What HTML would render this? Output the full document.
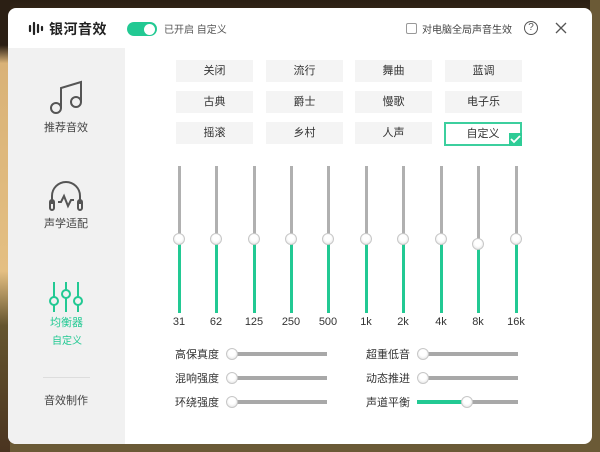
<!DOCTYPE html>
<html><head><meta charset="utf-8"><style>
*{margin:0;padding:0;box-sizing:border-box}
body{width:600px;height:452px;overflow:hidden;position:relative;font-family:"Liberation Sans","Noto Sans CJK SC",sans-serif;background:linear-gradient(180deg,#2b1f14 0,#4e3a22 10%,#6b5a36 100%)}
.leftbg{position:absolute;left:0;top:0;width:10px;height:452px;background:linear-gradient(180deg,#2b1f14 0,#2b1f14 10%,#d9b277 14%,#e4bf82 60%,#65552f 72%,#4a3420 100%)}
.rightbg{position:absolute;right:0;top:0;width:10px;height:452px;background:#6b5a36}
.win{position:absolute;left:8px;top:8px;width:584px;height:436px;background:#fff;border-radius:8px;overflow:hidden}
.side{position:absolute;left:0;top:40px;width:117px;height:396px;background:#f1f1f1}
.t{position:absolute;white-space:nowrap}
.btn{position:absolute;width:77px;height:22px;background:#f4f4f4;color:#333;font-size:11px;text-align:center;line-height:22px}
.eq{position:absolute;width:3px;top:158px;height:147px;background:#b0b0b0}
.eqg{position:absolute;width:3px;background:#22c993}
.knob{position:absolute;width:12px;height:12px;border-radius:50%;background:radial-gradient(circle at 50% 40%,#fff 40%,#ddd);border:1px solid #c8c8c8}
.lab{position:absolute;top:308px;font-size:11px;color:#333;width:30px;text-align:center}
.sl{position:absolute;height:4px;background:#a8a8a8}
.sll{position:absolute;font-size:11px;color:#333}
</style></head><body>
<div class="leftbg"></div><div class="rightbg"></div>
<div class="win">
<div class="side"></div>
<svg class="t" style="left:20px;top:13px" width="16" height="14"><g stroke="#222" stroke-width="2.2" stroke-linecap="round"><line x1="2" y1="5" x2="2" y2="10"/><line x1="6" y1="2" x2="6" y2="13"/><line x1="10" y1="4" x2="10" y2="11"/><line x1="14" y1="6" x2="14" y2="9"/></g></svg>
<div class="t" style="left:41px;top:11px;font-size:14px;font-weight:bold;color:#222;letter-spacing:0.5px">银河音效</div>
<div class="t" style="left:119px;top:14px;width:30px;height:14px;border-radius:7px;background:#22c993"></div>
<div class="t" style="left:136px;top:16px;width:11px;height:11px;border-radius:50%;background:#fff"></div>
<div class="t" style="left:156px;top:13px;font-size:10px;color:#555">已开启 自定义</div>
<div class="t" style="left:398px;top:15px;width:11px;height:11px;border:1px solid #999;border-radius:2px"></div>
<div class="t" style="left:414px;top:13px;font-size:10px;color:#444">对电脑全局声音生效</div>
<div class="t" style="left:516px;top:13px;width:14px;height:14px;border:1.3px solid #555;border-radius:50%;font-size:10px;line-height:12px;text-align:center;color:#555">?</div>
<svg class="t" style="left:547px;top:14px" width="12" height="12"><path d="M1 1L11 11M11 1L1 11" stroke="#555" stroke-width="1.3"/></svg>
<svg class="t" style="left:38px;top:70px" width="40" height="40"><g fill="none" stroke="#555" stroke-width="2"><circle cx="10" cy="30" r="5"/><circle cx="30" cy="24" r="5"/><path d="M15 30V10L35 4V24"/></g></svg>
<div class="t" style="left:36px;top:111px;font-size:11px;color:#444">推荐音效</div>
<svg class="t" style="left:38px;top:170px" width="40" height="36"><g fill="none" stroke="#555" stroke-width="2"><path d="M6 26V18A14 14 0 0 1 34 18V26"/><rect x="4" y="22" width="4" height="10" rx="2"/><rect x="32" y="22" width="4" height="10" rx="2"/><path d="M12 24L15 24L18 18L22 28L25 22L28 22"/></g></svg>
<div class="t" style="left:36px;top:207px;font-size:11px;color:#444">声学适配</div>
<svg class="t" style="left:40px;top:272px" width="36" height="34"><g fill="none" stroke="#22c993" stroke-width="2"><line x1="6" y1="2" x2="6" y2="32"/><line x1="18" y1="2" x2="18" y2="32"/><line x1="30" y1="2" x2="30" y2="32"/><circle cx="6" cy="21" r="4" fill="#f1f1f1"/><circle cx="18" cy="14" r="4" fill="#f1f1f1"/><circle cx="30" cy="21" r="4" fill="#f1f1f1"/></g></svg>
<div class="t" style="left:42px;top:306px;font-size:11px;color:#22c993">均衡器</div>
<div class="t" style="left:44px;top:324px;font-size:10px;color:#22c993">自定义</div>
<div class="t" style="left:35px;top:369px;width:47px;height:1px;background:#ddd"></div>
<div class="t" style="left:36px;top:384px;font-size:11px;color:#444">音效制作</div>
<div class="btn" style="left:168px;top:52px">关闭</div>
<div class="btn" style="left:258px;top:52px">流行</div>
<div class="btn" style="left:347px;top:52px">舞曲</div>
<div class="btn" style="left:437px;top:52px">蓝调</div>
<div class="btn" style="left:168px;top:83px">古典</div>
<div class="btn" style="left:258px;top:83px">爵士</div>
<div class="btn" style="left:347px;top:83px">慢歌</div>
<div class="btn" style="left:437px;top:83px">电子乐</div>
<div class="btn" style="left:168px;top:114px">摇滚</div>
<div class="btn" style="left:258px;top:114px">乡村</div>
<div class="btn" style="left:347px;top:114px">人声</div>
<div class="btn" style="left:436px;top:114px;width:78px;height:24px;background:#fff;border:2px solid #3ccf9e;line-height:20px">自定义</div>
<div class="t" style="left:501px;top:125px;width:13px;height:13px;background:#2ecc96"></div>
<svg class="t" style="left:502px;top:127px" width="11" height="9"><path d="M1 4L4 7L10 1" stroke="#fff" stroke-width="1.8" fill="none"/></svg>
<div class="eq" style="left:170px"></div><div class="eqg" style="left:170px;top:231px;height:74px"></div><div class="knob" style="left:165px;top:225px"></div>
<div class="eq" style="left:207px"></div><div class="eqg" style="left:207px;top:231px;height:74px"></div><div class="knob" style="left:202px;top:225px"></div>
<div class="eq" style="left:245px"></div><div class="eqg" style="left:245px;top:231px;height:74px"></div><div class="knob" style="left:240px;top:225px"></div>
<div class="eq" style="left:282px"></div><div class="eqg" style="left:282px;top:231px;height:74px"></div><div class="knob" style="left:277px;top:225px"></div>
<div class="eq" style="left:319px"></div><div class="eqg" style="left:319px;top:231px;height:74px"></div><div class="knob" style="left:314px;top:225px"></div>
<div class="eq" style="left:357px"></div><div class="eqg" style="left:357px;top:231px;height:74px"></div><div class="knob" style="left:352px;top:225px"></div>
<div class="eq" style="left:394px"></div><div class="eqg" style="left:394px;top:231px;height:74px"></div><div class="knob" style="left:389px;top:225px"></div>
<div class="eq" style="left:432px"></div><div class="eqg" style="left:432px;top:231px;height:74px"></div><div class="knob" style="left:427px;top:225px"></div>
<div class="eq" style="left:469px"></div><div class="eqg" style="left:469px;top:236px;height:69px"></div><div class="knob" style="left:464px;top:230px"></div>
<div class="eq" style="left:507px"></div><div class="eqg" style="left:507px;top:231px;height:74px"></div><div class="knob" style="left:502px;top:225px"></div>
<div class="lab" style="left:156px">31</div><div class="lab" style="left:193px">62</div><div class="lab" style="left:231px">125</div><div class="lab" style="left:268px">250</div><div class="lab" style="left:305px">500</div><div class="lab" style="left:343px">1k</div><div class="lab" style="left:380px">2k</div><div class="lab" style="left:418px">4k</div><div class="lab" style="left:455px">8k</div><div class="lab" style="left:493px">16k</div>
<div class="sll" style="left:167px;top:338px">高保真度</div>
<div class="sll" style="left:167px;top:362px">混响强度</div>
<div class="sll" style="left:167px;top:386px">环绕强度</div>
<div class="sll" style="left:358px;top:338px">超重低音</div>
<div class="sll" style="left:358px;top:362px">动态推进</div>
<div class="sll" style="left:358px;top:386px">声道平衡</div>
<div class="sl" style="left:220px;top:344px;width:99px"></div><div class="knob" style="left:218px;top:340px"></div>
<div class="sl" style="left:220px;top:368px;width:99px"></div><div class="knob" style="left:218px;top:364px"></div>
<div class="sl" style="left:220px;top:392px;width:99px"></div><div class="knob" style="left:218px;top:388px"></div>
<div class="sl" style="left:411px;top:344px;width:99px"></div><div class="knob" style="left:409px;top:340px"></div>
<div class="sl" style="left:411px;top:368px;width:99px"></div><div class="knob" style="left:409px;top:364px"></div>
<div class="sl" style="left:411px;top:392px;width:99px"></div><div class="sl" style="left:409px;top:392px;width:50px;background:#22c993"></div><div class="knob" style="left:453px;top:388px"></div>
</div>
</body></html>
